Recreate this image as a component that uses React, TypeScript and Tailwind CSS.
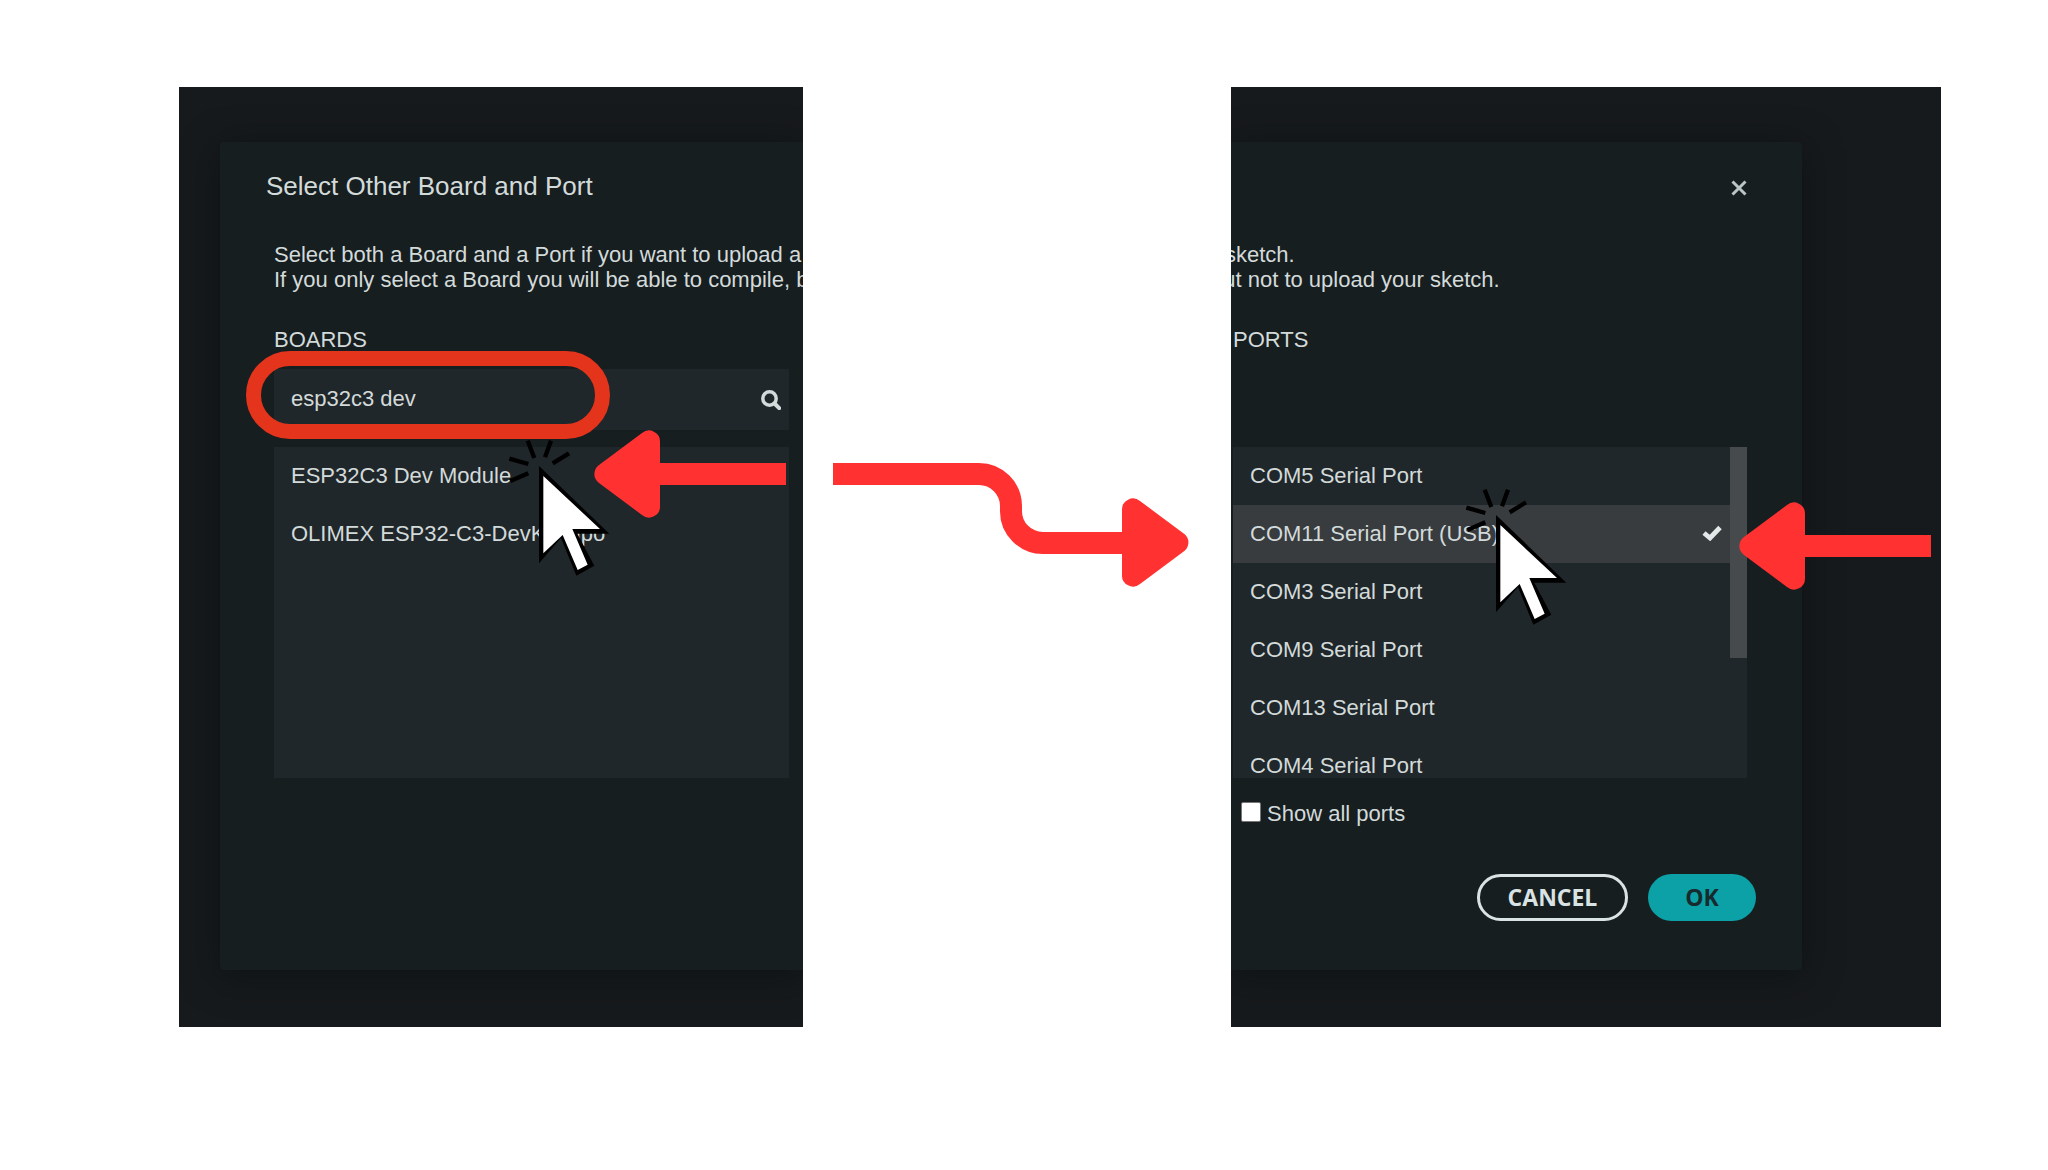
import type { ReactNode } from "react";

const BOARDS = ["ESP32C3 Dev Module", "OLIMEX ESP32-C3-DevKit-Lipo"];

const PORTS = [
  { name: "COM5 Serial Port", selected: false },
  { name: "COM11 Serial Port (USB)", selected: true },
  { name: "COM3 Serial Port", selected: false },
  { name: "COM9 Serial Port", selected: false },
  { name: "COM13 Serial Port", selected: false },
  { name: "COM4 Serial Port", selected: false },
];

function ClickCursor({ className }: { className: string }) {
  return (
    <svg viewBox="0 0 306 414" className={`pointer-events-none absolute h-[138px] w-[102px] ${className}`} aria-hidden="true">
      <g stroke="#000" strokeWidth="13" fill="none">
        <path d="M59 8L79 60M129 8L111 58M183 46L134 76M4 62L61 78M7 129L61 106" />
      </g>
      <path d="M93 84L304 287H208L259 383L205 413L159 300L93 376Z" fill="#000" />
      <path d="M106 114L276 273H193L239 380L209 396L164 291L106 346Z" fill="#fff" />
    </svg>
  );
}

function LeftArrow({ className }: { className: string }) {
  return (
    <svg viewBox="0 0 192 88" className={`pointer-events-none absolute h-[88px] w-[192px] ${className}`} aria-hidden="true">
      <path d="M66 33H192V55H66V76A11 11 0 0 1 48 85L5 53A11 11 0 0 1 5 35L48 3A11 11 0 0 1 66 12Z" fill="#ff3131" />
    </svg>
  );
}

function ConnectingArrow() {
  return (
    <svg viewBox="0 0 358 124" className="h-[124px] w-[358px]" aria-hidden="true">
      <path d="M0 11H146A32 32 0 0 1 178 43V47A32 32 0 0 0 211 80H300" fill="none" stroke="#ff3131" strokeWidth="22" />
      <path d="M289 47A11 11 0 0 1 307 38L350 70A11 11 0 0 1 350 89L307 121A11 11 0 0 1 289 112Z" fill="#ff3131" />
    </svg>
  );
}

function Backdrop({ children, className }: { children: ReactNode; className: string }) {
  return (
    <section className={`flex overflow-hidden bg-[#171a1c] pt-[55px] pb-[57px] ${className}`}>{children}</section>
  );
}

function BoardsPanel() {
  return (
    <Backdrop className="pl-[41px]">
      <div className="min-w-0 flex-1 rounded-l-sm bg-[#171e20] pt-7 shadow-[0_6px_36px_rgba(8,14,16,0.6)]">
        <h1 className="pl-[46px] text-[26px] leading-8 whitespace-nowrap">Select Other Board and Port</h1>
        <div className="pr-[14px] pl-[54px]">
          <p className="mt-10 leading-[25px] whitespace-nowrap">
            Select both a Board and a Port if you want to upload a sketch.
            <br />
            If you only select a Board you will be able to compile, but not to upload your sketch.
          </p>
          <label htmlFor="board-search" className="mt-[35px] block leading-[25px]">
            BOARDS
          </label>
          <div className="relative mt-[17px] flex h-[61px] items-center bg-[#20272a] pr-2 pl-[17px]">
            <input
              id="board-search"
              type="text"
              defaultValue="esp32c3 dev"
              className="h-full min-w-0 flex-1 bg-transparent pb-0.5 text-[#d3dada] outline-none"
            />
            <svg viewBox="0 0 20 20" className="size-5" fill="none" stroke="#d3dada" aria-hidden="true">
              <circle cx="8.500" cy="8.500" r="6.700" strokeWidth="3.500" />
              <path d="M13.500 13.500L18.200 18.200" strokeWidth="4" strokeLinecap="round" />
            </svg>
            <div className="pointer-events-none absolute -top-[18px] -left-7 h-[88px] w-[364px] rounded-full border-[15px] border-[#e4341b]" />
          </div>
          <div className="relative mt-[17px] h-[331px] bg-[#20272a]">
            <ul>
              {BOARDS.map((b) => (
                <li key={b} className="flex h-[58px] items-center pb-0.5 pl-[17px] whitespace-nowrap">
                  {b}
                </li>
              ))}
            </ul>
            <ClickCursor className="-top-[9px] left-[234px]" />
            <LeftArrow className="-top-[17px] right-[3px]" />
          </div>
        </div>
      </div>
    </Backdrop>
  );
}

function PortsPanel() {
  return (
    <Backdrop className="pr-[139px]">
      <div className="min-w-0 flex-1 rounded-r-sm bg-[#171e20] pt-7 pb-[49px] shadow-[0_6px_36px_rgba(8,14,16,0.6)]">
        <div className="flex h-8 items-center justify-end pt-1 pr-[55px]">
          <button type="button" aria-label="Close">
            <svg viewBox="0 0 16 16" className="size-4" fill="none" stroke="#bcc5c6" strokeWidth="3" aria-hidden="true">
              <path d="M1.500 1.500L14.500 14.500M14.500 1.500L1.500 14.500" />
            </svg>
          </button>
        </div>
        <p className="mt-10 leading-[25px] whitespace-nowrap">
          <span className="-ml-1.5 block">sketch.</span>
          <span className="-ml-5 block">but not to upload your sketch.</span>
        </p>
        <div className="pr-[55px] pl-0.5">
          <h2 className="mt-[35px] leading-[25px]">PORTS</h2>
          <div className="relative mt-[95px] h-[331px]">
            <div className="flex h-full overflow-hidden bg-[#20272a]">
              <ul className="flex-1">
                {PORTS.map((p) => (
                  <li
                    key={p.name}
                    className={`flex h-[58px] items-center justify-between pr-2 pb-0.5 pl-[17px] whitespace-nowrap ${p.selected ? "bg-[#383c3f]" : ""}`}
                  >
                    {p.name}
                    {p.selected && (
                      <svg viewBox="0 0 20 16" className="h-4 w-5" fill="none" stroke="#e3e8e8" strokeWidth="4.800" aria-hidden="true">
                        <path d="M2 8L8 13L18 2.500" />
                      </svg>
                    )}
                  </li>
                ))}
              </ul>
              <div className="h-[211px] w-[17px] bg-[#474a4c]" />
            </div>
            <ClickCursor className="top-10 left-[232px]" />
            <LeftArrow className="top-[55px] -right-[184px]" />
          </div>
          <label className="mt-[23px] flex h-[25px] items-center gap-1.5 pl-2">
            <input type="checkbox" className="mb-1 size-5 appearance-none rounded-xs border border-[#767676] bg-white" />
            Show all ports
          </label>
        </div>
        <div className="mt-12 flex justify-end gap-5 pr-[46px] font-['Open_Sans',sans-serif] text-[23px] font-bold">
          <button type="button" className="h-[47px] w-[151px] rounded-full border-[3px] border-[#dae3e3] text-[#dae3e3]">
            CANCEL
          </button>
          <button type="button" className="h-[47px] w-[108px] rounded-full bg-[#0ca1a6] text-[#172b2e]">
            OK
          </button>
        </div>
      </div>
    </Backdrop>
  );
}

export default function App() {
  return (
    <main className="grid min-h-screen grid-cols-[179fr_624fr_428fr_710fr_107fr] items-start bg-white pt-[87px] pb-[143px] font-['Liberation_Sans',Arial,sans-serif] text-[22px] text-[#d3dada]">
      <div className="col-start-2 grid self-stretch">
        <BoardsPanel />
      </div>
      <div className="flex justify-center pt-[376px] pr-[10px]">
        <ConnectingArrow />
      </div>
      <PortsPanel />
    </main>
  );
}
